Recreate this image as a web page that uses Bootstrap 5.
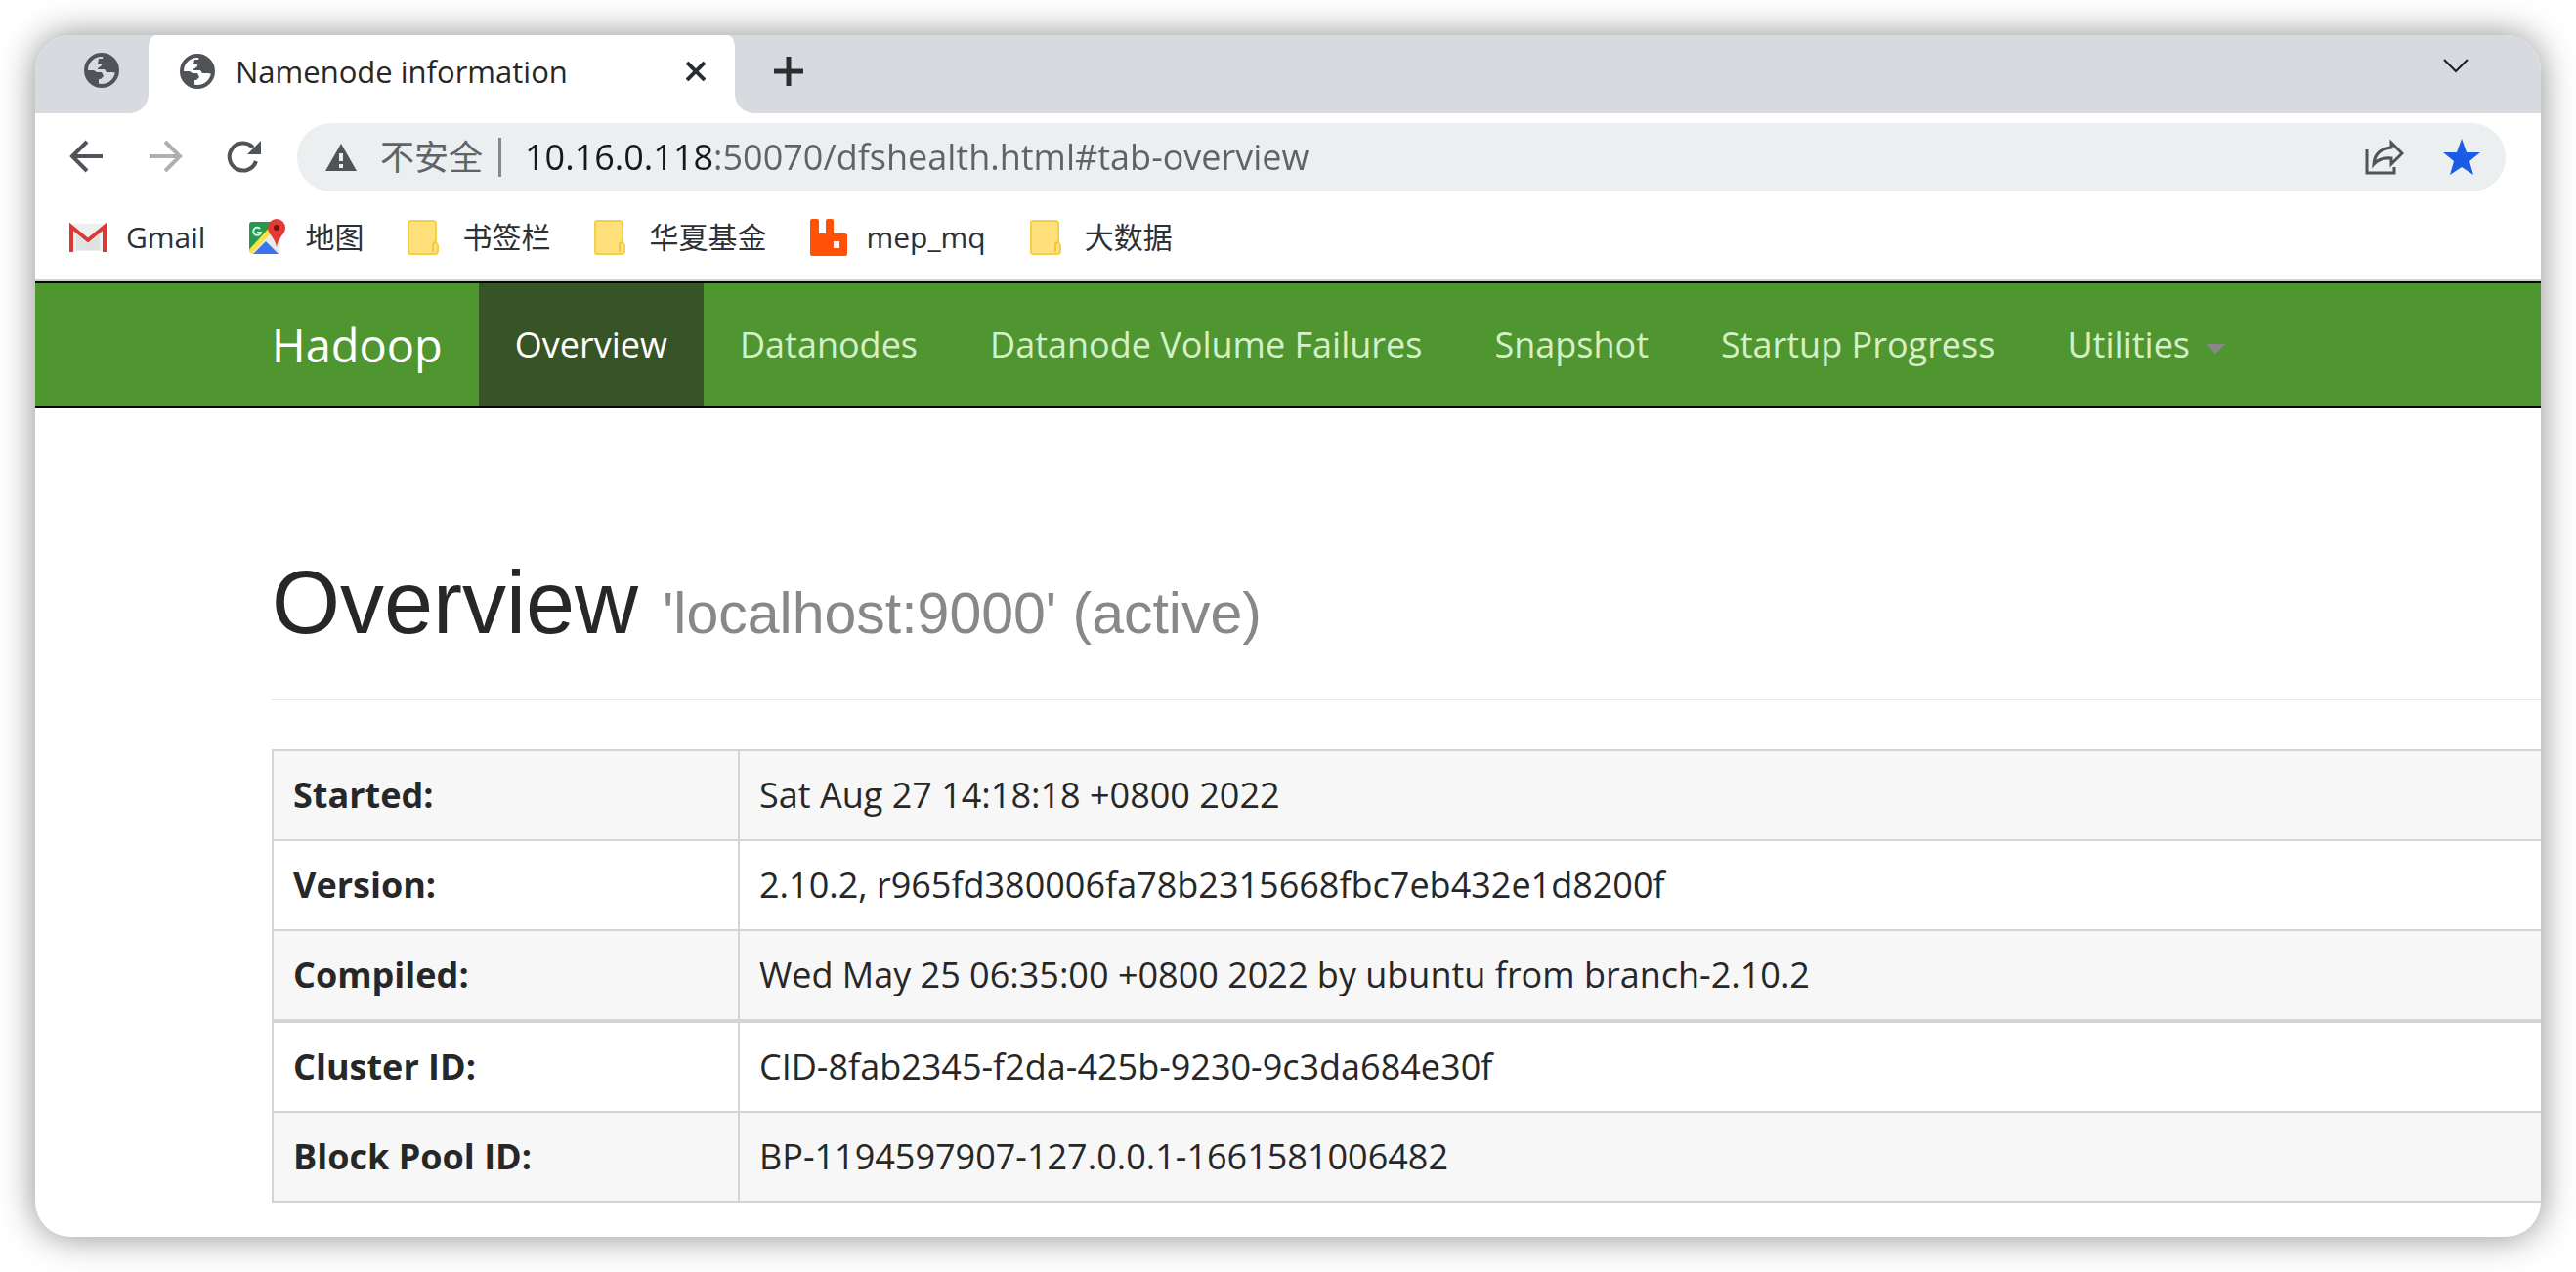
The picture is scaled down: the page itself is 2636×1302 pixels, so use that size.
<!DOCTYPE html>
<html lang="zh-CN">
<head>
<meta charset="utf-8">
<meta name="viewport" content="width=device-width, initial-scale=1">
<title>Namenode information</title>
<link href="https://cdn.jsdelivr.net/npm/bootstrap@5.3.0/dist/css/bootstrap.min.css" rel="stylesheet">
<style>
  :root { --strip: #d7dadf; --ink: #272727; --icon: #505357; --line: #d4d4d4; }
  body { font-family: "Open Sans", "Noto Sans CJK SC", sans-serif; color: var(--ink); background: #fff; padding: 36px; }
  svg { display: block; flex: none; }
  .browser { min-height: calc(100vh - 72px); border-radius: 36px; background: #fff; box-shadow: 0 0 36px rgba(0,0,0,.45); }
  .clip-area { border-radius: 36px; overflow: hidden; }
  .plain-btn { padding: 0; border: 0; background: none; color: var(--icon); }

  .tab-strip { height: 80px; }
  .pinned-area { width: 116px; padding: 18px 0 0 50px; background: var(--strip); border-bottom-right-radius: 20px; }
  .tab-holder { width: 600px; background: linear-gradient(var(--strip) 14px, #fff 14px); }
  .open-tab { height: 80px; background: #fff; border-radius: 7px 7px 0 0 / 14px 14px 0 0; padding: 0 30px 6px 32px; gap: 21px; font-size: 31px; line-height: 42px; }
  .strip-rest { background: var(--strip); border-bottom-left-radius: 20px; padding: 18px 74px 0 40px; }

  .tool-row { padding: 10px 36px 10px 34px; gap: 45px; }
  .omnibox { height: 70px; border-radius: 35px; background: #ebeff0; padding: 0 26px 0 29px; margin-left: -9px; }
  .omnibox .state { font-size: 35px; line-height: 50px; color: #5f6368; margin-left: 24px; }
  .omnibox .divider { width: 3px; height: 40px; background: #85898c; margin: 0 24px 0 16px; }
  .omnibox input { min-width: 0; border: 0; padding: 0; outline: 0; font-size: 36px; line-height: 50px; color: #5f6368;
    background: linear-gradient(90deg, #17181a 192px, #5f6368 192px); -webkit-background-clip: text; background-clip: text; -webkit-text-fill-color: transparent; }

  .bookmarks { height: 82px; padding: 0 0 6px 34px; border-bottom: 2px solid #cfcfcf; gap: 45px; font-size: 30px; line-height: 40px; }
  .bookmarks a { color: #2d3034; text-decoration: none; display: flex; align-items: center; gap: 19px; }
  .bookmarks a.folder-link { gap: 24px; }

  .site-nav { background: #509630; border-top: 2px solid #080808; border-bottom: 2px solid #080808; padding: 0 0 0 242px; }
  .site-nav .navbar-brand { font-size: 47px; line-height: 64px; padding: 31px 37px 31px 0; margin: 0; color: #fff; }
  .site-nav .navbar-nav .nav-link { font-size: 36px; line-height: 50px; padding: 38px 37px; color: #d6efc9; }
  .site-nav .navbar-nav .nav-link.active { background: #375427; color: #fff; }
  .site-nav .dropdown-toggle::after { color: #888; border-top-width: 10px; border-left-width: 10px; border-right-width: 10px; margin-left: 16px; vertical-align: 4px; }

  .site-main { padding-left: 242px; }
  .page-title { font-family: "Liberation Sans", sans-serif; font-size: 90px; line-height: 98px; font-weight: 400; margin: 150px 0 0; padding-bottom: 38px; border-bottom: 2px solid #e7e7e7; }
  .page-title small { font-size: 59px; color: #888; }
  .info-table { width: calc(100% + 2px); margin: 50px -2px 34px 0; border-collapse: collapse; font-size: 36px; line-height: 50px; color: var(--ink); }
  .info-table th, .info-table td { border: 2px solid var(--line); padding: 20px; font-weight: 400; }
  .info-table th { width: 477px; font-weight: 700; }
  .info-table tr:nth-child(odd) { background: #f7f7f7; }
  .info-table .split > * { border-top-width: 4px; }
</style>
</head>
<body>
<svg width="0" height="0" class="position-absolute" aria-hidden="true">
  <symbol id="globe" viewBox="0 0 36 36">
    <circle cx="18" cy="18" r="16" fill="none" stroke="#505357" stroke-width="4"/>
    <path fill="#505357" d="M1 18h9l3 2h5l2 4-3 3h-2v7C8 34 1 27 1 18zM20 2l-1 4h-4l-1 5h4v2l-4 3v1h7l2 3h6l5 1C36 9 30 3 20 2z"/>
  </symbol>
  <symbol id="folder" viewBox="0 0 32 36">
    <path d="M3 1h23q3 0 3 3v19l2 3v6q0 3-3 3H3q-2 0-2-2V3q0-2 2-2z" fill="#ffe07a" stroke="#f3d04c" stroke-width="2"/>
    <path d="M26 33v-7q0-3 3-3" fill="none" stroke="#eec843" stroke-width="2"/>
  </symbol>
</svg>
<div class="browser">
<div class="clip-area">
  <header>
    <div class="tab-strip d-flex">
      <div class="pinned-area"><button class="plain-btn" aria-label="Tab"><svg width="36" height="36"><use href="#globe"/></svg></button></div>
      <div class="tab-holder">
        <div class="open-tab d-flex align-items-center">
          <svg width="36" height="36"><use href="#globe"/></svg>
          <span class="me-auto">Namenode information</span>
          <button class="plain-btn" aria-label="Close tab"><svg width="20" height="20" viewBox="0 0 20 20"><path d="M1 1l18 18M19 1L1 19" stroke="#2b2e31" stroke-width="4"/></svg></button>
        </div>
      </div>
      <div class="strip-rest flex-grow-1 d-flex justify-content-between align-items-start">
        <button class="plain-btn" aria-label="New tab"><svg width="30" height="38" viewBox="0 0 30 38"><path d="M15 4v30M0 19h30" stroke="#2b2e31" stroke-width="5"/></svg></button>
        <button class="plain-btn" aria-label="Search tabs"><svg width="26" height="26" viewBox="0 0 26 26"><path d="M1 7l12 12L25 7" fill="none" stroke="#1d1f21" stroke-width="2"/></svg></button>
      </div>
    </div>
    <div class="tool-row d-flex align-items-center">
      <button class="plain-btn" aria-label="Back"><svg width="36" height="36" viewBox="0 0 36 36"><path d="M35 17H6M19 2L4 17l15 15" fill="none" stroke="#505357" stroke-width="4"/></svg></button>
      <button class="plain-btn" aria-label="Forward"><svg width="36" height="36" viewBox="0 0 36 36"><path d="M2 17h29M18 2l15 15-15 15" fill="none" stroke="#adb0b2" stroke-width="4"/></svg></button>
      <button class="plain-btn" aria-label="Reload"><svg width="36" height="36" viewBox="0 0 36 36"><path d="M30 22A14 14 0 1 1 27 8" fill="none" stroke="#505357" stroke-width="4"/><path d="M35 1v14H21z" fill="#505357"/></svg></button>
      <div class="omnibox flex-grow-1 d-flex align-items-center">
        <svg width="32" height="28" viewBox="0 0 32 28"><path fill="#505357" fill-rule="evenodd" d="M16 0l16 28H0zM14 10v8h4v-8zm0 11v4h4v-4z"/></svg>
        <label class="state" for="address">不安全</label>
        <span class="divider"></span>
        <input id="address" class="flex-grow-1" type="text" value="10.16.0.118:50070/dfshealth.html#tab-overview">
        <button class="plain-btn me-4 pe-3" aria-label="Share"><svg width="40" height="38" viewBox="0 0 40 38"><path d="M2 11v24h28v-6" fill="none" stroke="#505357" stroke-width="3"/><path d="M27 4l11 11-11 11v-6q-12-1-18 6 1-15 18-17z" fill="none" stroke="#505357" stroke-width="3"/></svg></button>
        <button class="plain-btn" aria-label="Bookmark"><svg width="38" height="38" viewBox="0 0 38 38"><path fill="#1a5ce5" d="M19 0l5 14h14L27 23l4 14-12-8-12 8 4-14L0 14h14z"/></svg></button>
      </div>
    </div>
    <nav class="bookmarks d-flex align-items-center" aria-label="Bookmarks">
      <a href="#"><svg width="40" height="36" viewBox="0 0 40 36"><path fill="#eef0f0" d="M3 4h34v28H3z"/><path fill="#dfe2e2" d="M8 31V15l12 9 12-9v16z"/><path d="M3 33V7l17 14L37 7v26" fill="none" stroke="#d93a36" stroke-width="4"/></svg>Gmail</a>
      <a href="#"><svg width="38" height="38" viewBox="0 0 38 38"><rect y="3" width="32" height="33" rx="3" fill="#e8eaec"/><path fill="#25994d" d="M3 3h27L0 34V6q0-3 3-3z"/><path fill="#3d73ec" d="M4 36l13-13 13 13z"/><path d="M1 34l22-24" stroke="#fde23c" stroke-width="5"/><path d="M11 10a4 4 0 1 0 1 4H8" fill="none" stroke="#d9f0df" stroke-width="2"/><path fill="#e33b34" d="M28 0a9 9 0 0 1 9 9c0 7-7 9-9 20-2-11-9-13-9-20a9 9 0 0 1 9-9z"/><circle cx="28" cy="9" r="3" fill="#701410"/></svg>地图</a>
      <a class="folder-link" href="#"><svg width="32" height="36"><use href="#folder"/></svg>书签栏</a>
      <a class="folder-link" href="#"><svg width="32" height="36"><use href="#folder"/></svg>华夏基金</a>
      <a href="#"><svg width="38" height="38" viewBox="0 0 38 38"><path fill="#ff5208" fill-rule="evenodd" d="M2 0h5q2 0 2 2v13h7V2q0-2 2-2h4q2 0 2 2v13h12q2 0 2 2v19q0 2-2 2H2q-2 0-2-2V2q0-2 2-2zM24 23v7h6v-7z"/></svg>mep_mq</a>
      <a class="folder-link" href="#"><svg width="32" height="36"><use href="#folder"/></svg>大数据</a>
    </nav>
  </header>

  <nav class="site-nav navbar navbar-expand">
    <a class="navbar-brand" href="#">Hadoop</a>
    <ul class="navbar-nav">
      <li class="nav-item"><a class="nav-link active" href="#">Overview</a></li>
      <li class="nav-item"><a class="nav-link" href="#">Datanodes</a></li>
      <li class="nav-item"><a class="nav-link" href="#">Datanode Volume Failures</a></li>
      <li class="nav-item"><a class="nav-link" href="#">Snapshot</a></li>
      <li class="nav-item"><a class="nav-link" href="#">Startup Progress</a></li>
      <li class="nav-item dropdown"><a class="nav-link dropdown-toggle" href="#" role="button">Utilities</a></li>
    </ul>
  </nav>

  <main class="site-main">
    <h1 class="page-title">Overview <small>'localhost:9000' (active)</small></h1>
    <table class="info-table">
      <tbody>
        <tr><th scope="row">Started:</th><td>Sat Aug 27 14:18:18 +0800 2022</td></tr>
        <tr><th scope="row">Version:</th><td>2.10.2, r965fd380006fa78b2315668fbc7eb432e1d8200f</td></tr>
        <tr><th scope="row">Compiled:</th><td>Wed May 25 06:35:00 +0800 2022 by ubuntu from branch-2.10.2</td></tr>
        <tr class="split"><th scope="row">Cluster ID:</th><td>CID-8fab2345-f2da-425b-9230-9c3da684e30f</td></tr>
        <tr><th scope="row">Block Pool ID:</th><td>BP-1194597907-127.0.0.1-1661581006482</td></tr>
      </tbody>
    </table>
  </main>
</div>
</div>
<script src="https://cdn.jsdelivr.net/npm/bootstrap@5.3.0/dist/js/bootstrap.bundle.min.js"></script>
</body>
</html>
